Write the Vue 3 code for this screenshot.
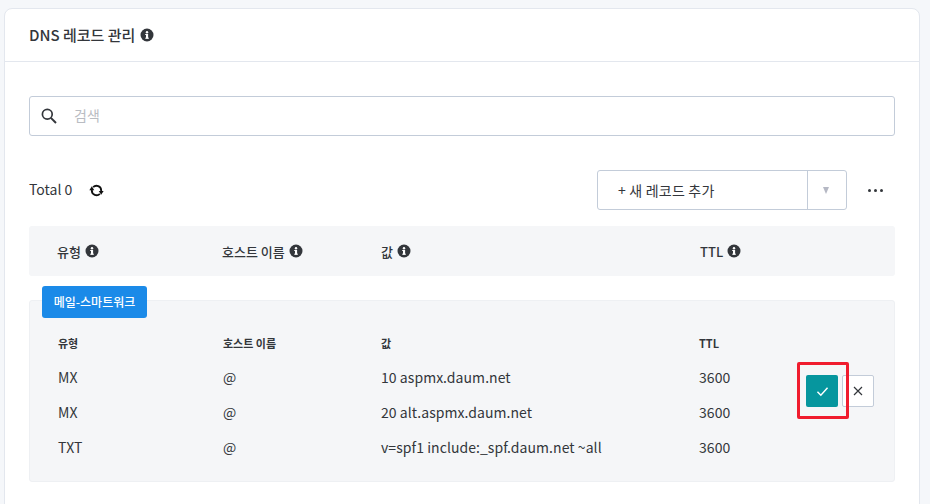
<script setup>
const heads = [
  { label: '유형' },
  { label: '호스트 이름' },
  { label: '값' },
  { label: 'TTL' }
]
const rows = [
  { type: 'MX', host: '@', value: '10 aspmx.daum.net', ttl: '3600' },
  { type: 'MX', host: '@', value: '20 alt.aspmx.daum.net', ttl: '3600' },
  { type: 'TXT', host: '@', value: 'v=spf1 include:_spf.daum.net ~all', ttl: '3600' }
]
</script>

<template>
  <div class="page">
    <section class="card">
      <header class="card-head">
        <h1>DNS 레코드 관리</h1>
        <svg class="info" viewBox="0 0 14 14"><circle cx="7" cy="7" r="6.5" fill="#33363b"/><rect x="6" y="6" width="2.1" height="4.6" fill="#fff"/><rect x="5.2" y="6" width="2" height="1" fill="#fff"/><rect x="5.2" y="9.7" width="3.7" height="1" fill="#fff"/><circle cx="7" cy="4.2" r="1.2" fill="#fff"/></svg>
      </header>
      <div class="card-body">
        <div class="search">
          <svg class="search-icon" viewBox="0 0 16 16" fill="none" stroke="#33363b" stroke-width="1.7"><circle cx="6.3" cy="6.3" r="4.9"/><path d="M9.9 9.9 15 15" stroke-width="2"/></svg>
          <span class="placeholder">검색</span>
        </div>

        <div class="toolbar">
          <span class="total">Total 0</span>
          <svg class="refresh" viewBox="0 0 16 16" fill="none" stroke="#111" stroke-width="2">
            <path d="M3 7.2V8a5 5 0 0 0 8.6 3.5"/>
            <path d="M13 8.8V8a5 5 0 0 0-8.6-3.5"/>
            <path d="M3 3.4.4 7.6h5.2z" fill="#111" stroke="none"/>
            <path d="M13 12.6 15.6 8.4h-5.2z" fill="#111" stroke="none"/>
          </svg>
          <div class="add">
            <span class="add-main">+ 새 레코드 추가</span>
            <span class="add-caret"></span>
          </div>
          <div class="more"><i></i><i></i><i></i></div>
        </div>

        <div class="table-head cols wide">
          <div v-for="h in heads" :key="h.label" class="th">
            <span>{{ h.label }}</span>
            <svg class="info" viewBox="0 0 14 14"><circle cx="7" cy="7" r="6.5" fill="#33363b"/><rect x="6" y="6" width="2.1" height="4.6" fill="#fff"/><rect x="5.2" y="6" width="2" height="1" fill="#fff"/><rect x="5.2" y="9.7" width="3.7" height="1" fill="#fff"/><circle cx="7" cy="4.2" r="1.2" fill="#fff"/></svg>
          </div>
        </div>

        <div class="group">
          <span class="badge">메일-스마트워크</span>
          <div class="group-head cols">
            <div v-for="h in heads" :key="h.label">{{ h.label }}</div>
          </div>
          <div v-for="(r, i) in rows" :key="i" class="row cols">
            <div>{{ r.type }}</div>
            <div>{{ r.host }}</div>
            <div>{{ r.value }}</div>
            <div>{{ r.ttl }}</div>
          </div>
          <div class="actions">
            <button class="ok">
              <svg viewBox="0 0 14 12" fill="none" stroke="#fff" stroke-width="1.6"><path d="M1.5 6.2 5.2 10 12.5 2"/></svg>
            </button>
            <button class="cancel">
              <svg viewBox="0 0 10 10" fill="none" stroke="#33363b" stroke-width="1.2"><path d="M1 1l8 8M9 1l-8 8"/></svg>
            </button>
            <span class="highlight"></span>
          </div>
        </div>
      </div>
    </section>
  </div>
</template>

<style>
html, body { margin: 0; background: #f5f7fa; overflow: hidden; }
</style>

<style scoped>
.page {
  width: 930px;
  height: 504px;
  padding: 8px 10px 0 4px;
  box-sizing: border-box;
  overflow: hidden;
  background: #f5f7fa;
  font-family: "Noto Sans CJK KR", "Noto Sans", sans-serif;
  color: #33363b;
  font-size: 14px;
}
.card {
  height: 560px;
  background: #fff;
  border: 1px solid #e3e7ee;
  border-radius: 8px;
  box-sizing: border-box;
}
.card-head {
  height: 53px;
  padding: 0 24px;
  display: flex;
  align-items: center;
  gap: 5px;
  border-bottom: 1px solid #e3e7ee;
  box-sizing: border-box;
}
h1 { margin: 0; font-size: 15px; font-weight: 500; line-height: 20px; }
.info { width: 14px; height: 14px; flex: none; }
.card-body { padding: 34px 24px 0; }
.search {
  height: 40px;
  border: 1px solid #c3ccd9;
  border-radius: 3px;
  display: flex;
  align-items: center;
  padding-left: 11px;
  box-sizing: border-box;
}
.search-icon { width: 16px; height: 16px; margin-bottom: 1px; }
.placeholder { margin-left: 17px; margin-bottom: 2px; color: #b9bcc2; font-size: 14px; }
.toolbar { display: flex; align-items: center; height: 40px; margin-top: 34px; }
.total { font-size: 14px; margin-bottom: 2px; }
.refresh { width: 15px; height: 15px; margin-left: 17px; }
.add {
  margin-left: auto;
  width: 250px;
  height: 40px;
  display: flex;
  border: 1px solid #c3ccd9;
  border-radius: 3px;
  box-sizing: border-box;
}
.add-main { flex: 1; padding-left: 20px; line-height: 38px; font-size: 14px; letter-spacing: 0.2px; border-right: 1px solid #c3ccd9; }
.add-caret { width: 38px; position: relative; }
.add-caret::after {
  content: "";
  position: absolute;
  left: 15px;
  top: 16px;
  border-left: 3.5px solid transparent;
  border-right: 3.5px solid transparent;
  border-top: 7px solid #b5b8c4;
}
.more { width: 48px; display: flex; justify-content: center; gap: 3px; padding-left: 8px; box-sizing: border-box; }
.more i { width: 3px; height: 3px; border-radius: 50%; background: #33363b; }
.cols { display: grid; grid-template-columns: 165px 158px 318px 1fr; }
.cols.wide { grid-template-columns: 165px 159px 319px 1fr; }
.table-head {
  height: 50px;
  margin-top: 16px;
  padding-left: 28px;
  background: #f5f6f8;
  border-radius: 3px;
  align-items: center;
}
.th { display: flex; align-items: center; gap: 4px; font-size: 13px; font-weight: 500; }
.group {
  position: relative;
  height: 182px;
  margin-top: 24px;
  padding: 34px 0 0 28px;
  background: #f5f6f8;
  border: 1px solid #eef0f3;
  border-radius: 3px;
  box-sizing: border-box;
}
.badge {
  position: absolute;
  left: 12px;
  top: -15px;
  width: 105px;
  height: 32px;
  border-radius: 3px;
  background: #1b8ae8;
  color: #fff;
  font-size: 12px;
  font-weight: 500;
  line-height: 32px;
  text-align: center;
}
.group-head { font-size: 11px; font-weight: 700; line-height: 16px; margin-bottom: 8px; }
.row { height: 35px; align-items: center; font-size: 14px; letter-spacing: 0.06px; }
.actions {
  position: absolute;
  left: 776px;
  top: 74px;
  display: flex;
  gap: 4px;
}
button { padding: 0; display: flex; align-items: center; justify-content: center; border-radius: 2px; box-sizing: border-box; }
.ok { width: 32px; height: 32px; background: #06969e; border: none; }
.ok svg { width: 13px; height: 11px; }
.cancel { width: 32px; height: 32px; background: #fff; border: 1px solid #c3ccd9; }
.cancel svg { width: 10px; height: 10px; }
.highlight {
  position: absolute;
  left: -9px;
  top: -13px;
  width: 52px;
  height: 57px;
  border: 3px solid #f01c2e;
  border-radius: 2px;
  box-sizing: border-box;
  pointer-events: none;
}
</style>
